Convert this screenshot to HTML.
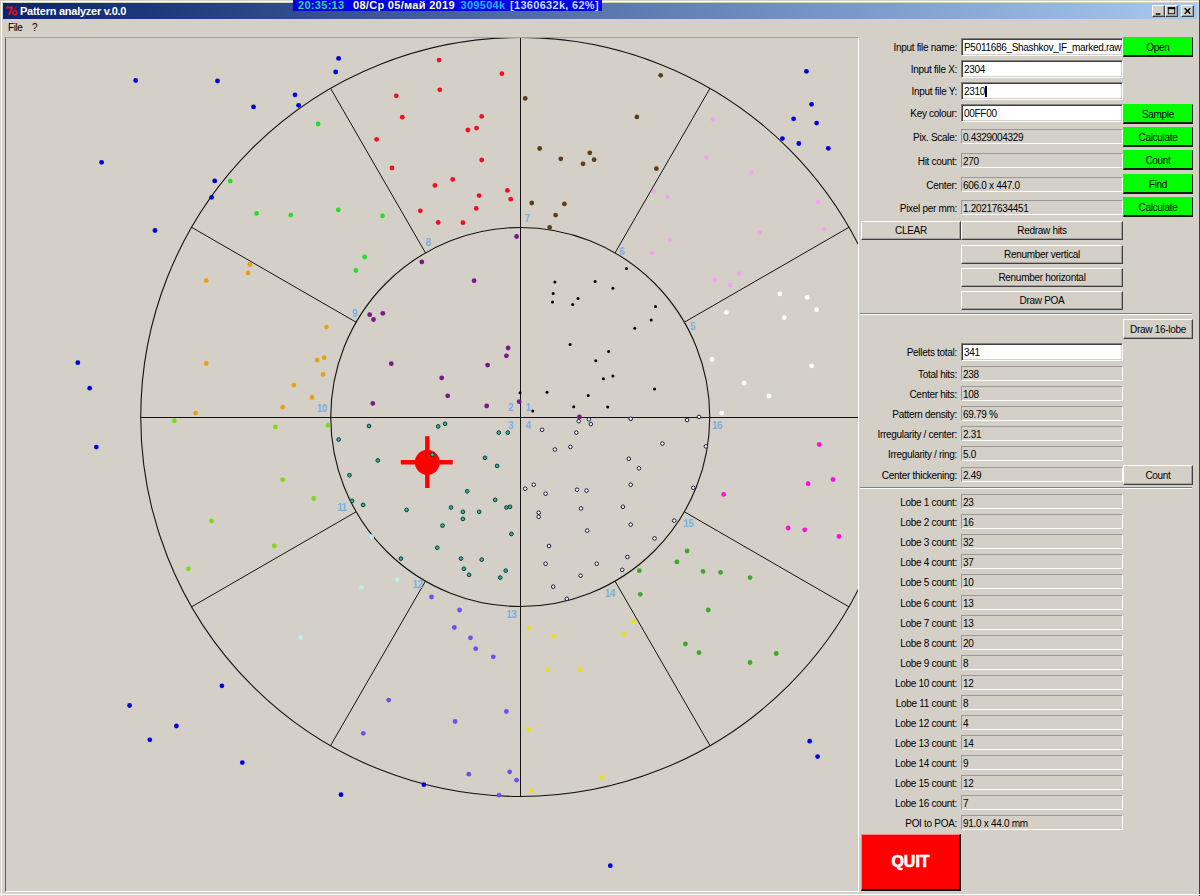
<!DOCTYPE html><html><head><meta charset="utf-8"><style>
*{margin:0;padding:0;box-sizing:border-box}
html,body{width:1200px;height:896px;overflow:hidden;background:#d4d0c8;font-family:"Liberation Sans",sans-serif;font-size:10px;color:#000;position:relative}
.a{position:absolute}
.lbl{position:absolute;right:243px;text-align:right;white-space:nowrap;letter-spacing:-0.3px}
.fld{position:absolute;left:961px;width:162px;border-top:1px solid #989898;border-left:1px solid #989898;border-bottom:1px solid #fff;border-right:1px solid #fff;background:#d4d0c8;padding-left:1px;white-space:nowrap;overflow:hidden;letter-spacing:-0.3px}
.wf{position:absolute;left:961px;width:162px;border-top:1px solid #808080;border-left:1px solid #808080;border-bottom:1px solid #fff;border-right:1px solid #fff;box-shadow:inset 1px 1px 0 #404040,inset -1px -1px 0 #d4d0c8;background:#fff;padding-left:2px;white-space:nowrap;overflow:hidden;letter-spacing:-0.3px}
.caret{display:inline-block;width:2px;height:11px;background:#000;vertical-align:middle;margin-top:-1px}
.btn{position:absolute;border-top:1px solid #fff;border-left:1px solid #fff;border-right:1px solid #404040;border-bottom:1px solid #404040;box-shadow:inset -1px -1px 0 #a0a0a0;background:#d4d0c8;text-align:center;white-space:nowrap;letter-spacing:-0.3px}
.g{background:#00ff00;border-top-color:#00ff00;border-left-color:#00ff00;border-right:1px solid #102010;border-bottom:2px solid #102010;box-shadow:none}
.sep{position:absolute;left:860px;width:332px;height:2px;border-top:1px solid #808080;border-bottom:1px solid #fff}
.clk{font-weight:bold;font-size:11px;line-height:12px;white-space:nowrap;letter-spacing:0.3px}
svg text.ln{font-family:"Liberation Sans",sans-serif;font-size:10px;font-weight:bold;fill:#78b0e0;letter-spacing:-0.6px}
</style></head><body>
<div class="a" style="left:0;top:0;width:1200px;height:896px;border-left:1px solid #d4d0c8;border-top:1px solid #d4d0c8;box-shadow:inset 1px 1px 0 #fff"></div>
<div class="a" style="left:1199px;top:0;width:1px;height:896px;background:#404040"></div>
<div class="a" style="left:0;top:894px;width:1200px;height:1px;background:#fff"></div>
<div class="a" style="left:3px;top:3px;width:1194px;height:16px;background:linear-gradient(to right,#0a246a,#a6caf0)"></div>
<svg class="a" style="left:0;top:0" width="22" height="20" viewBox="0 0 22 20"><path d="M6 7.5 L12 7.5 L9 15" fill="none" stroke="#d01830" stroke-width="2"/><path d="M16.5 6.5 Q13.5 9 13.2 12.5" fill="none" stroke="#a01040" stroke-width="1.3"/><circle cx="14.8" cy="12.8" r="2" fill="none" stroke="#e0102a" stroke-width="1.6"/></svg>
<div class="a" style="left:20px;top:3px;font-size:11px;font-weight:bold;color:#fff;line-height:16px;letter-spacing:-0.25px">Pattern analyzer v.0.0</div>
<div class="a" style="left:293px;top:0;width:309px;height:11px;background:#0000e8"></div>
<div class="a clk" style="left:298px;top:-1px;color:#30d890">20:35:13</div>
<div class="a clk" style="left:353px;top:-1px;color:#ffffa8">08/Ср 05/май 2019</div>
<div class="a clk" style="left:460.5px;top:-1px;color:#20b8ff">309504k</div>
<div class="a clk" style="left:510px;top:-1px;color:#c8dcff">[1360632k, 62%]</div>
<div class="btn" style="left:1152px;top:5px;width:13px;height:12px"><svg width="11" height="10" viewBox="0 0 12 10" style="position:absolute;left:0;top:0"><rect x="3" y="7.5" width="5" height="1.6" fill="#000"/></svg></div>
<div class="btn" style="left:1165px;top:5px;width:13px;height:12px"><svg width="11" height="10" viewBox="0 0 12 10" style="position:absolute;left:0;top:0"><rect x="2.5" y="1.5" width="7" height="6.5" fill="none" stroke="#000" stroke-width="1"/><rect x="2" y="1" width="8" height="2" fill="#000"/></svg></div>
<div class="btn" style="left:1181px;top:5px;width:13px;height:12px"><svg width="11" height="10" viewBox="0 0 12 10" style="position:absolute;left:0;top:0"><path d="M3 2 L9 8 M9 2 L3 8" stroke="#000" stroke-width="1.6"/></svg></div>
<div class="a" style="left:8px;top:22px;line-height:12px;letter-spacing:-0.4px">File</div>
<div class="a" style="left:32px;top:22px;line-height:12px">?</div>
<div class="a" style="left:5px;top:37px;width:854px;height:855px;border-top:1px solid #a0a0a0;border-left:1px solid #606060;border-right:1px solid #fff;border-bottom:1px solid #fff;overflow:hidden">
<svg width="852" height="853" viewBox="6 38 852 853" style="position:absolute;left:0;top:0">
<circle cx="520.25" cy="417.0" r="379.5" fill="none" stroke="#141414" stroke-width="1.1"/>
<circle cx="520.25" cy="417.0" r="189.5" fill="none" stroke="#141414" stroke-width="1.1"/>
<line x1="140.75" y1="417.5" x2="860" y2="417.5" stroke="#141414" stroke-width="1"/>
<line x1="520.5" y1="37.5" x2="520.5" y2="796.5" stroke="#141414" stroke-width="1"/>
<line x1="684.4" y1="322.2" x2="848.9" y2="227.3" stroke="#141414" stroke-width="1"/>
<line x1="615.0" y1="252.9" x2="710.0" y2="88.3" stroke="#141414" stroke-width="1"/>
<line x1="425.5" y1="252.9" x2="330.5" y2="88.3" stroke="#141414" stroke-width="1"/>
<line x1="356.1" y1="322.2" x2="191.6" y2="227.3" stroke="#141414" stroke-width="1"/>
<line x1="356.1" y1="511.8" x2="191.6" y2="606.8" stroke="#141414" stroke-width="1"/>
<line x1="425.5" y1="581.1" x2="330.5" y2="745.7" stroke="#141414" stroke-width="1"/>
<line x1="615.0" y1="581.1" x2="710.0" y2="745.7" stroke="#141414" stroke-width="1"/>
<line x1="684.4" y1="511.8" x2="848.9" y2="606.8" stroke="#141414" stroke-width="1"/>
<circle cx="135.7" cy="80.5" r="2.4" fill="#0000dd"/>
<circle cx="217.5" cy="81" r="2.4" fill="#0000dd"/>
<circle cx="101.6" cy="162.3" r="2.4" fill="#0000dd"/>
<circle cx="214.7" cy="180.9" r="2.4" fill="#0000dd"/>
<circle cx="211.6" cy="197.3" r="2.4" fill="#0000dd"/>
<circle cx="155" cy="230.5" r="2.4" fill="#0000dd"/>
<circle cx="338.6" cy="58.4" r="2.4" fill="#0000dd"/>
<circle cx="335.7" cy="72" r="2.4" fill="#0000dd"/>
<circle cx="295" cy="94.8" r="2.4" fill="#0000dd"/>
<circle cx="298.6" cy="105.3" r="2.4" fill="#0000dd"/>
<circle cx="253.5" cy="106.9" r="2.4" fill="#0000dd"/>
<circle cx="806.4" cy="71.3" r="2.4" fill="#0000dd"/>
<circle cx="811.6" cy="104.3" r="2.4" fill="#0000dd"/>
<circle cx="793.6" cy="118.8" r="2.4" fill="#0000dd"/>
<circle cx="816.6" cy="123.1" r="2.4" fill="#0000dd"/>
<circle cx="782.4" cy="138.6" r="2.4" fill="#0000dd"/>
<circle cx="798.8" cy="143.5" r="2.4" fill="#0000dd"/>
<circle cx="828.3" cy="148.3" r="2.4" fill="#0000dd"/>
<circle cx="77.8" cy="362.7" r="2.4" fill="#0000dd"/>
<circle cx="89.7" cy="388.2" r="2.4" fill="#0000dd"/>
<circle cx="96.3" cy="447.1" r="2.4" fill="#0000dd"/>
<circle cx="129.6" cy="705.5" r="2.4" fill="#0000dd"/>
<circle cx="176.4" cy="726" r="2.4" fill="#0000dd"/>
<circle cx="149.8" cy="739.8" r="2.4" fill="#0000dd"/>
<circle cx="221.9" cy="685.8" r="2.4" fill="#0000dd"/>
<circle cx="242.3" cy="762.6" r="2.4" fill="#0000dd"/>
<circle cx="341" cy="794.7" r="2.4" fill="#0000dd"/>
<circle cx="423.9" cy="784.7" r="2.4" fill="#0000dd"/>
<circle cx="610.3" cy="865.7" r="2.4" fill="#0000dd"/>
<circle cx="809.7" cy="741.2" r="2.4" fill="#0000dd"/>
<circle cx="817.6" cy="756.6" r="2.4" fill="#0000dd"/>
<circle cx="318.1" cy="124" r="2.4" fill="#20e020"/>
<circle cx="230.2" cy="181.1" r="2.4" fill="#20e020"/>
<circle cx="256.6" cy="213.4" r="2.4" fill="#20e020"/>
<circle cx="290.8" cy="215.1" r="2.4" fill="#20e020"/>
<circle cx="338.3" cy="209.9" r="2.4" fill="#20e020"/>
<circle cx="382.5" cy="215.8" r="2.4" fill="#20e020"/>
<circle cx="364.7" cy="256.9" r="2.4" fill="#20e020"/>
<circle cx="355.9" cy="270.5" r="2.4" fill="#20e020"/>
<circle cx="396.3" cy="95.8" r="2.4" fill="#f01020"/>
<circle cx="402.3" cy="117.2" r="2.4" fill="#f01020"/>
<circle cx="376.6" cy="139.3" r="2.4" fill="#f01020"/>
<circle cx="392" cy="168" r="2.4" fill="#f01020"/>
<circle cx="420.3" cy="210.8" r="2.4" fill="#f01020"/>
<circle cx="439.1" cy="60.1" r="2.4" fill="#f01020"/>
<circle cx="501.9" cy="73.7" r="2.4" fill="#f01020"/>
<circle cx="439.8" cy="89.8" r="2.4" fill="#f01020"/>
<circle cx="481.7" cy="116.4" r="2.4" fill="#f01020"/>
<circle cx="467.9" cy="130" r="2.4" fill="#f01020"/>
<circle cx="476.5" cy="128.1" r="2.4" fill="#f01020"/>
<circle cx="481.7" cy="160" r="2.4" fill="#f01020"/>
<circle cx="452.7" cy="179.4" r="2.4" fill="#f01020"/>
<circle cx="434.9" cy="185.4" r="2.4" fill="#f01020"/>
<circle cx="479.1" cy="195.6" r="2.4" fill="#f01020"/>
<circle cx="507.4" cy="190.4" r="2.4" fill="#f01020"/>
<circle cx="510.7" cy="199.2" r="2.4" fill="#f01020"/>
<circle cx="476.2" cy="208.4" r="2.4" fill="#f01020"/>
<circle cx="438.2" cy="222.5" r="2.4" fill="#f01020"/>
<circle cx="462.9" cy="222.7" r="2.4" fill="#f01020"/>
<circle cx="525.2" cy="98.4" r="2.4" fill="#5a3f18"/>
<circle cx="636.9" cy="116.9" r="2.4" fill="#5a3f18"/>
<circle cx="539.7" cy="148.5" r="2.4" fill="#5a3f18"/>
<circle cx="560.8" cy="158.8" r="2.4" fill="#5a3f18"/>
<circle cx="589.8" cy="152.8" r="2.4" fill="#5a3f18"/>
<circle cx="594.1" cy="159.7" r="2.4" fill="#5a3f18"/>
<circle cx="583" cy="163.8" r="2.4" fill="#5a3f18"/>
<circle cx="531.8" cy="203" r="2.4" fill="#5a3f18"/>
<circle cx="564.4" cy="203.9" r="2.4" fill="#5a3f18"/>
<circle cx="555.6" cy="215.1" r="2.4" fill="#5a3f18"/>
<circle cx="549.7" cy="227.5" r="2.4" fill="#5a3f18"/>
<circle cx="660.7" cy="75.3" r="2.4" fill="#5a3f18"/>
<circle cx="656.4" cy="168.7" r="2.4" fill="#5a3f18"/>
<circle cx="713.2" cy="119.3" r="2.4" fill="#eea6ee"/>
<circle cx="706.3" cy="157.6" r="2.4" fill="#eea6ee"/>
<circle cx="751.3" cy="172.5" r="2.4" fill="#eea6ee"/>
<circle cx="654" cy="191.3" r="2.4" fill="#eea6ee"/>
<circle cx="667.6" cy="196.8" r="2.4" fill="#eea6ee"/>
<circle cx="818" cy="202" r="2.4" fill="#eea6ee"/>
<circle cx="759.8" cy="232.9" r="2.4" fill="#eea6ee"/>
<circle cx="824" cy="229.4" r="2.4" fill="#eea6ee"/>
<circle cx="670" cy="240" r="2.4" fill="#eea6ee"/>
<circle cx="652.1" cy="253.4" r="2.4" fill="#eea6ee"/>
<circle cx="714.7" cy="280" r="2.4" fill="#eea6ee"/>
<circle cx="730.1" cy="285" r="2.4" fill="#eea6ee"/>
<circle cx="739.1" cy="273.6" r="2.4" fill="#eea6ee"/>
<circle cx="206.2" cy="280.7" r="2.4" fill="#e8a018"/>
<circle cx="206.2" cy="363.4" r="2.4" fill="#e8a018"/>
<circle cx="195.7" cy="413.1" r="2.4" fill="#e8a018"/>
<circle cx="249.9" cy="264.5" r="2.4" fill="#e8a018"/>
<circle cx="248" cy="272.9" r="2.4" fill="#e8a018"/>
<circle cx="326.4" cy="327.1" r="2.4" fill="#e8a018"/>
<circle cx="317.2" cy="360.1" r="2.4" fill="#e8a018"/>
<circle cx="324.1" cy="357.7" r="2.4" fill="#e8a018"/>
<circle cx="323.1" cy="374.4" r="2.4" fill="#e8a018"/>
<circle cx="293.9" cy="385.1" r="2.4" fill="#e8a018"/>
<circle cx="312" cy="397.4" r="2.4" fill="#e8a018"/>
<circle cx="282.7" cy="407.2" r="2.4" fill="#e8a018"/>
<circle cx="174.3" cy="420.7" r="2.4" fill="#80d818"/>
<circle cx="275.3" cy="426.9" r="2.4" fill="#80d818"/>
<circle cx="327.9" cy="425.2" r="2.4" fill="#80d818"/>
<circle cx="211.6" cy="521" r="2.4" fill="#80d818"/>
<circle cx="188.3" cy="568.8" r="2.4" fill="#80d818"/>
<circle cx="282.7" cy="479.7" r="2.4" fill="#80d818"/>
<circle cx="313.8" cy="498.5" r="2.4" fill="#80d818"/>
<circle cx="274.4" cy="546" r="2.4" fill="#80d818"/>
<circle cx="421.8" cy="261.9" r="2.4" fill="#7a1888"/>
<circle cx="369.7" cy="314.7" r="2.4" fill="#7a1888"/>
<circle cx="373.5" cy="319.5" r="2.4" fill="#7a1888"/>
<circle cx="382.8" cy="313.3" r="2.4" fill="#7a1888"/>
<circle cx="391.3" cy="363.7" r="2.4" fill="#7a1888"/>
<circle cx="372.8" cy="403.4" r="2.4" fill="#7a1888"/>
<circle cx="474.1" cy="280.7" r="2.4" fill="#7a1888"/>
<circle cx="508.1" cy="348" r="2.4" fill="#7a1888"/>
<circle cx="506.4" cy="355.8" r="2.4" fill="#7a1888"/>
<circle cx="487.6" cy="365.1" r="2.4" fill="#7a1888"/>
<circle cx="441.7" cy="377.9" r="2.4" fill="#7a1888"/>
<circle cx="447.7" cy="395.8" r="2.4" fill="#7a1888"/>
<circle cx="486.7" cy="406" r="2.4" fill="#7a1888"/>
<circle cx="519.2" cy="401.7" r="2.4" fill="#7a1888"/>
<circle cx="579.4" cy="416.9" r="2.4" fill="#7a1888"/>
<circle cx="516.6" cy="236.5" r="2.4" fill="#7a1888"/>
<circle cx="369" cy="426" r="1.85" fill="#30b8a0" stroke="#083838" stroke-width="1"/>
<circle cx="338.6" cy="439.5" r="1.85" fill="#30b8a0" stroke="#083838" stroke-width="1"/>
<circle cx="377.8" cy="460.4" r="1.85" fill="#30b8a0" stroke="#083838" stroke-width="1"/>
<circle cx="438.2" cy="426.4" r="1.85" fill="#30b8a0" stroke="#083838" stroke-width="1"/>
<circle cx="445.1" cy="423.8" r="1.85" fill="#30b8a0" stroke="#083838" stroke-width="1"/>
<circle cx="498.8" cy="432.6" r="1.85" fill="#30b8a0" stroke="#083838" stroke-width="1"/>
<circle cx="507.8" cy="432.6" r="1.85" fill="#30b8a0" stroke="#083838" stroke-width="1"/>
<circle cx="485" cy="457.8" r="1.85" fill="#30b8a0" stroke="#083838" stroke-width="1"/>
<circle cx="349.5" cy="475.2" r="1.85" fill="#30b8a0" stroke="#083838" stroke-width="1"/>
<circle cx="352.1" cy="500.8" r="1.85" fill="#30b8a0" stroke="#083838" stroke-width="1"/>
<circle cx="363.1" cy="504.9" r="1.85" fill="#30b8a0" stroke="#083838" stroke-width="1"/>
<circle cx="406.6" cy="509.9" r="1.85" fill="#30b8a0" stroke="#083838" stroke-width="1"/>
<circle cx="400.9" cy="558.6" r="1.85" fill="#30b8a0" stroke="#083838" stroke-width="1"/>
<circle cx="497.1" cy="465.9" r="1.85" fill="#30b8a0" stroke="#083838" stroke-width="1"/>
<circle cx="467.2" cy="491.3" r="1.85" fill="#30b8a0" stroke="#083838" stroke-width="1"/>
<circle cx="495.2" cy="499.9" r="1.85" fill="#30b8a0" stroke="#083838" stroke-width="1"/>
<circle cx="451" cy="507.5" r="1.85" fill="#30b8a0" stroke="#083838" stroke-width="1"/>
<circle cx="462.9" cy="511.8" r="1.85" fill="#30b8a0" stroke="#083838" stroke-width="1"/>
<circle cx="479.1" cy="511.8" r="1.85" fill="#30b8a0" stroke="#083838" stroke-width="1"/>
<circle cx="506.4" cy="507.5" r="1.85" fill="#30b8a0" stroke="#083838" stroke-width="1"/>
<circle cx="510" cy="506.8" r="1.85" fill="#30b8a0" stroke="#083838" stroke-width="1"/>
<circle cx="462.9" cy="518.9" r="1.85" fill="#30b8a0" stroke="#083838" stroke-width="1"/>
<circle cx="442.5" cy="525.6" r="1.85" fill="#30b8a0" stroke="#083838" stroke-width="1"/>
<circle cx="511.4" cy="533.9" r="1.85" fill="#30b8a0" stroke="#083838" stroke-width="1"/>
<circle cx="437.2" cy="547.7" r="1.85" fill="#30b8a0" stroke="#083838" stroke-width="1"/>
<circle cx="461" cy="558.6" r="1.85" fill="#30b8a0" stroke="#083838" stroke-width="1"/>
<circle cx="481.7" cy="559.6" r="1.85" fill="#30b8a0" stroke="#083838" stroke-width="1"/>
<circle cx="463.9" cy="568.8" r="1.85" fill="#30b8a0" stroke="#083838" stroke-width="1"/>
<circle cx="469.1" cy="574.8" r="1.85" fill="#30b8a0" stroke="#083838" stroke-width="1"/>
<circle cx="505.7" cy="570.7" r="1.85" fill="#30b8a0" stroke="#083838" stroke-width="1"/>
<circle cx="500.2" cy="577.6" r="1.85" fill="#30b8a0" stroke="#083838" stroke-width="1"/>
<circle cx="626.5" cy="268.6" r="1.5" fill="#000000"/>
<circle cx="554.9" cy="282.1" r="1.5" fill="#000000"/>
<circle cx="595.1" cy="281.4" r="1.5" fill="#000000"/>
<circle cx="612.9" cy="288.3" r="1.5" fill="#000000"/>
<circle cx="553.2" cy="293.6" r="1.5" fill="#000000"/>
<circle cx="552.5" cy="301.9" r="1.5" fill="#000000"/>
<circle cx="578" cy="298.5" r="1.5" fill="#000000"/>
<circle cx="572.7" cy="304.5" r="1.5" fill="#000000"/>
<circle cx="634.8" cy="328.3" r="1.5" fill="#000000"/>
<circle cx="570.1" cy="344.4" r="1.5" fill="#000000"/>
<circle cx="608.6" cy="351.6" r="1.5" fill="#000000"/>
<circle cx="595.8" cy="360.8" r="1.5" fill="#000000"/>
<circle cx="603.4" cy="378.7" r="1.5" fill="#000000"/>
<circle cx="612.9" cy="376" r="1.5" fill="#000000"/>
<circle cx="547" cy="392.2" r="1.5" fill="#000000"/>
<circle cx="588.2" cy="395.5" r="1.5" fill="#000000"/>
<circle cx="520" cy="392.7" r="1.5" fill="#000000"/>
<circle cx="573.7" cy="406.7" r="1.5" fill="#000000"/>
<circle cx="607.7" cy="407" r="1.5" fill="#000000"/>
<circle cx="532.8" cy="411" r="1.5" fill="#000000"/>
<circle cx="655.5" cy="306.4" r="1.5" fill="#000000"/>
<circle cx="651.2" cy="319.9" r="1.5" fill="#000000"/>
<circle cx="654.5" cy="388.9" r="1.5" fill="#000000"/>
<circle cx="578.7" cy="421.2" r="1.8" fill="#ffffd8" stroke="#141450" stroke-width="1"/>
<circle cx="588.9" cy="419.3" r="1.8" fill="#ffffd8" stroke="#141450" stroke-width="1"/>
<circle cx="590.8" cy="424.1" r="1.8" fill="#ffffd8" stroke="#141450" stroke-width="1"/>
<circle cx="630.7" cy="418.8" r="1.8" fill="#ffffd8" stroke="#141450" stroke-width="1"/>
<circle cx="542.1" cy="429.8" r="1.8" fill="#ffffd8" stroke="#141450" stroke-width="1"/>
<circle cx="576.3" cy="432.6" r="1.8" fill="#ffffd8" stroke="#141450" stroke-width="1"/>
<circle cx="570.4" cy="446.9" r="1.8" fill="#ffffd8" stroke="#141450" stroke-width="1"/>
<circle cx="554.9" cy="449.5" r="1.8" fill="#ffffd8" stroke="#141450" stroke-width="1"/>
<circle cx="628.8" cy="458.8" r="1.8" fill="#ffffd8" stroke="#141450" stroke-width="1"/>
<circle cx="687.1" cy="420" r="1.8" fill="#ffffd8" stroke="#141450" stroke-width="1"/>
<circle cx="699" cy="416.9" r="1.8" fill="#ffffd8" stroke="#141450" stroke-width="1"/>
<circle cx="662.4" cy="443.6" r="1.8" fill="#ffffd8" stroke="#141450" stroke-width="1"/>
<circle cx="705.9" cy="446.4" r="1.8" fill="#ffffd8" stroke="#141450" stroke-width="1"/>
<circle cx="639" cy="468.3" r="1.8" fill="#ffffd8" stroke="#141450" stroke-width="1"/>
<circle cx="525.2" cy="488.7" r="1.8" fill="#ffffd8" stroke="#141450" stroke-width="1"/>
<circle cx="533.7" cy="484.7" r="1.8" fill="#ffffd8" stroke="#141450" stroke-width="1"/>
<circle cx="545.6" cy="493.7" r="1.8" fill="#ffffd8" stroke="#141450" stroke-width="1"/>
<circle cx="577" cy="489.7" r="1.8" fill="#ffffd8" stroke="#141450" stroke-width="1"/>
<circle cx="586.5" cy="490.6" r="1.8" fill="#ffffd8" stroke="#141450" stroke-width="1"/>
<circle cx="630.7" cy="484.7" r="1.8" fill="#ffffd8" stroke="#141450" stroke-width="1"/>
<circle cx="581" cy="508.5" r="1.8" fill="#ffffd8" stroke="#141450" stroke-width="1"/>
<circle cx="622.9" cy="506.8" r="1.8" fill="#ffffd8" stroke="#141450" stroke-width="1"/>
<circle cx="538.7" cy="512.7" r="1.8" fill="#ffffd8" stroke="#141450" stroke-width="1"/>
<circle cx="538.7" cy="516.8" r="1.8" fill="#ffffd8" stroke="#141450" stroke-width="1"/>
<circle cx="630.7" cy="524.6" r="1.8" fill="#ffffd8" stroke="#141450" stroke-width="1"/>
<circle cx="587.2" cy="530.6" r="1.8" fill="#ffffd8" stroke="#141450" stroke-width="1"/>
<circle cx="549" cy="546" r="1.8" fill="#ffffd8" stroke="#141450" stroke-width="1"/>
<circle cx="627.4" cy="557" r="1.8" fill="#ffffd8" stroke="#141450" stroke-width="1"/>
<circle cx="545.6" cy="563.8" r="1.8" fill="#ffffd8" stroke="#141450" stroke-width="1"/>
<circle cx="596.7" cy="563.8" r="1.8" fill="#ffffd8" stroke="#141450" stroke-width="1"/>
<circle cx="622.2" cy="569.8" r="1.8" fill="#ffffd8" stroke="#141450" stroke-width="1"/>
<circle cx="580.6" cy="575.7" r="1.8" fill="#ffffd8" stroke="#141450" stroke-width="1"/>
<circle cx="553.2" cy="586.7" r="1.8" fill="#ffffd8" stroke="#141450" stroke-width="1"/>
<circle cx="566.8" cy="598.8" r="1.8" fill="#ffffd8" stroke="#141450" stroke-width="1"/>
<circle cx="693.3" cy="487.8" r="1.8" fill="#ffffd8" stroke="#141450" stroke-width="1"/>
<circle cx="674.2" cy="520.6" r="1.8" fill="#ffffd8" stroke="#141450" stroke-width="1"/>
<circle cx="654.5" cy="538.4" r="1.8" fill="#ffffd8" stroke="#141450" stroke-width="1"/>
<circle cx="779.8" cy="293.8" r="2.4" fill="#ffffff"/>
<circle cx="807.1" cy="297.4" r="2.4" fill="#ffffff"/>
<circle cx="816.6" cy="309.7" r="2.4" fill="#ffffff"/>
<circle cx="784.3" cy="317.6" r="2.4" fill="#ffffff"/>
<circle cx="726.3" cy="312.3" r="2.4" fill="#ffffff"/>
<circle cx="712" cy="359.4" r="2.4" fill="#ffffff"/>
<circle cx="811.6" cy="365.8" r="2.4" fill="#ffffff"/>
<circle cx="744.1" cy="383.2" r="2.4" fill="#ffffff"/>
<circle cx="768.9" cy="396" r="2.4" fill="#ffffff"/>
<circle cx="721.8" cy="413.1" r="2.4" fill="#ffffff"/>
<circle cx="819.2" cy="444.5" r="2.4" fill="#ff10d8"/>
<circle cx="723.7" cy="494.4" r="2.4" fill="#ff10d8"/>
<circle cx="808.1" cy="483.7" r="2.4" fill="#ff10d8"/>
<circle cx="833" cy="479.5" r="2.4" fill="#ff10d8"/>
<circle cx="788.1" cy="528" r="2.4" fill="#ff10d8"/>
<circle cx="804.7" cy="529.8" r="2.4" fill="#ff10d8"/>
<circle cx="839" cy="536.5" r="2.4" fill="#ff10d8"/>
<circle cx="371.6" cy="536.7" r="2.4" fill="#b8f0f0"/>
<circle cx="361.6" cy="587.6" r="2.4" fill="#b8f0f0"/>
<circle cx="397.3" cy="579.8" r="2.4" fill="#b8f0f0"/>
<circle cx="300.5" cy="637.5" r="2.4" fill="#b8f0f0"/>
<circle cx="431.5" cy="597" r="2.4" fill="#7050e8"/>
<circle cx="459.6" cy="610" r="2.4" fill="#7050e8"/>
<circle cx="454.3" cy="627.5" r="2.4" fill="#7050e8"/>
<circle cx="470.5" cy="637.8" r="2.4" fill="#7050e8"/>
<circle cx="475.7" cy="648.7" r="2.4" fill="#7050e8"/>
<circle cx="493.3" cy="656.8" r="2.4" fill="#7050e8"/>
<circle cx="388.7" cy="700.1" r="2.4" fill="#7050e8"/>
<circle cx="363.3" cy="733.3" r="2.4" fill="#7050e8"/>
<circle cx="506.4" cy="711.5" r="2.4" fill="#7050e8"/>
<circle cx="455.1" cy="721.5" r="2.4" fill="#7050e8"/>
<circle cx="468.8" cy="774.2" r="2.4" fill="#7050e8"/>
<circle cx="509.7" cy="771.8" r="2.4" fill="#7050e8"/>
<circle cx="516.6" cy="780.2" r="2.4" fill="#7050e8"/>
<circle cx="499" cy="795.1" r="2.4" fill="#7050e8"/>
<circle cx="528.8" cy="627.8" r="2.4" fill="#e8e020"/>
<circle cx="553.7" cy="636.3" r="2.4" fill="#e8e020"/>
<circle cx="547.5" cy="669.6" r="2.4" fill="#e8e020"/>
<circle cx="580.3" cy="669.4" r="2.4" fill="#e8e020"/>
<circle cx="633.6" cy="621.1" r="2.4" fill="#e8e020"/>
<circle cx="624.1" cy="634.4" r="2.4" fill="#e8e020"/>
<circle cx="528.8" cy="729.5" r="2.4" fill="#e8e020"/>
<circle cx="602.2" cy="777.8" r="2.4" fill="#e8e020"/>
<circle cx="531.1" cy="790.6" r="2.4" fill="#e8e020"/>
<circle cx="639.3" cy="570.7" r="2.4" fill="#40a828"/>
<circle cx="640.2" cy="594.3" r="2.4" fill="#40a828"/>
<circle cx="687.1" cy="551" r="2.4" fill="#40a828"/>
<circle cx="676.9" cy="561.9" r="2.4" fill="#40a828"/>
<circle cx="703" cy="571.4" r="2.4" fill="#40a828"/>
<circle cx="720.6" cy="572.4" r="2.4" fill="#40a828"/>
<circle cx="750.1" cy="577.6" r="2.4" fill="#40a828"/>
<circle cx="708.2" cy="610" r="2.4" fill="#40a828"/>
<circle cx="685.4" cy="644" r="2.4" fill="#40a828"/>
<circle cx="699" cy="652.7" r="2.4" fill="#40a828"/>
<circle cx="776.2" cy="653.5" r="2.4" fill="#40a828"/>
<circle cx="750.1" cy="662.5" r="2.4" fill="#40a828"/>
<text x="428" y="245.9" text-anchor="middle" class="ln">8</text>
<text x="527.1" y="221.7" text-anchor="middle" class="ln">7</text>
<text x="621.8" y="255.0" text-anchor="middle" class="ln">6</text>
<text x="354.5" y="317.0" text-anchor="middle" class="ln">9</text>
<text x="321.7" y="411.9" text-anchor="middle" class="ln">10</text>
<text x="510.4" y="411.4" text-anchor="middle" class="ln">2</text>
<text x="528" y="411.4" text-anchor="middle" class="ln">1</text>
<text x="510.4" y="428.7" text-anchor="middle" class="ln">3</text>
<text x="528" y="428.7" text-anchor="middle" class="ln">4</text>
<text x="692.5" y="330.1" text-anchor="middle" class="ln">5</text>
<text x="717" y="429.2" text-anchor="middle" class="ln">16</text>
<text x="341.9" y="511.0" text-anchor="middle" class="ln">11</text>
<text x="417.5" y="587.5" text-anchor="middle" class="ln">12</text>
<text x="511.2" y="618.0" text-anchor="middle" class="ln">13</text>
<text x="609.8" y="597.1" text-anchor="middle" class="ln">14</text>
<text x="688.3" y="527.4" text-anchor="middle" class="ln">15</text>
<g><line x1="400.8" y1="462.3" x2="452.7" y2="462.3" stroke="#ff0000" stroke-width="4.4"/><line x1="427.3" y1="436.2" x2="427.3" y2="488" stroke="#ff0000" stroke-width="4.4"/><circle cx="427.3" cy="462.3" r="12.5" fill="#ff0000"/><circle cx="432.4" cy="454.7" r="2" fill="#30c090" stroke="#083838" stroke-width="1"/></g>
</svg></div>
<div class="lbl" style="top:39px;height:18px;line-height:18px">Input file name:</div>
<div class="wf" style="top:38px;height:18px;line-height:17px">P5011686_Shashkov_IF_marked.raw</div>
<div class="lbl" style="top:61px;height:18px;line-height:18px">Input file X:</div>
<div class="wf" style="top:60px;height:18px;line-height:17px">2304</div>
<div class="lbl" style="top:83px;height:18px;line-height:18px">Input file Y:</div>
<div class="wf" style="top:82px;height:18px;line-height:17px">2310<span class="caret"></span></div>
<div class="lbl" style="top:105px;height:18px;line-height:18px">Key colour:</div>
<div class="wf" style="top:104px;height:18px;line-height:17px">00FF00</div>
<div class="btn g" style="left:1123px;top:37px;width:70px;height:20px;line-height:19px">Open</div>
<div class="btn g" style="left:1123px;top:104px;width:70px;height:20px;line-height:19px">Sample</div>
<div class="lbl" style="top:130px;height:15px;line-height:15px">Pix. Scale:</div>
<div class="fld" style="top:129px;height:15px;line-height:16px">0.4329004329</div>
<div class="btn g" style="left:1123px;top:127px;width:70px;height:20px;line-height:19px">Calculate</div>
<div class="lbl" style="top:154px;height:15px;line-height:15px">Hit count:</div>
<div class="fld" style="top:153px;height:15px;line-height:16px">270</div>
<div class="btn g" style="left:1123px;top:150px;width:70px;height:20px;line-height:19px">Count</div>
<div class="lbl" style="top:178px;height:15px;line-height:15px">Center:</div>
<div class="fld" style="top:177px;height:15px;line-height:16px">606.0 x 447.0</div>
<div class="btn g" style="left:1123px;top:174px;width:70px;height:20px;line-height:19px">Find</div>
<div class="lbl" style="top:201px;height:15px;line-height:15px">Pixel per mm:</div>
<div class="fld" style="top:200px;height:15px;line-height:16px">1.20217634451</div>
<div class="btn g" style="left:1123px;top:197px;width:70px;height:20px;line-height:19px">Calculate</div>
<div class="btn" style="left:861px;top:221px;width:100px;height:19px;line-height:18px">CLEAR</div>
<div class="btn" style="left:961px;top:221px;width:162px;height:19px;line-height:18px">Redraw hits</div>
<div class="btn" style="left:961px;top:245px;width:162px;height:19px;line-height:18px">Renumber vertical</div>
<div class="btn" style="left:961px;top:268px;width:162px;height:19px;line-height:18px">Renumber horizontal</div>
<div class="btn" style="left:961px;top:291px;width:162px;height:19px;line-height:18px">Draw POA</div>
<div class="sep" style="top:313px"></div>
<div class="btn" style="left:1123px;top:319px;width:70px;height:20px;line-height:19px">Draw 16-lobe</div>
<div class="lbl" style="top:344px;height:18px;line-height:18px">Pellets total:</div>
<div class="wf" style="top:343px;height:18px;line-height:17px">341</div>
<div class="lbl" style="top:367px;height:15px;line-height:15px">Total hits:</div>
<div class="fld" style="top:366px;height:15px;line-height:16px">238</div>
<div class="lbl" style="top:387px;height:15px;line-height:15px">Center hits:</div>
<div class="fld" style="top:386px;height:15px;line-height:16px">108</div>
<div class="lbl" style="top:407px;height:15px;line-height:15px">Pattern density:</div>
<div class="fld" style="top:406px;height:15px;line-height:16px">69.79 %</div>
<div class="lbl" style="top:427px;height:15px;line-height:15px">Irregularity / center:</div>
<div class="fld" style="top:426px;height:15px;line-height:16px">2.31</div>
<div class="lbl" style="top:447px;height:15px;line-height:15px">Irregularity / ring:</div>
<div class="fld" style="top:446px;height:15px;line-height:16px">5.0</div>
<div class="lbl" style="top:468px;height:15px;line-height:15px">Center thickening:</div>
<div class="fld" style="top:467px;height:15px;line-height:16px">2.49</div>
<div class="btn" style="left:1123px;top:465px;width:70px;height:20px;line-height:19px">Count</div>
<div class="sep" style="top:487px"></div>
<div class="lbl" style="top:495px;height:15px;line-height:15px">Lobe 1 count:</div>
<div class="fld" style="top:494px;height:15px;line-height:16px">23</div>
<div class="lbl" style="top:515px;height:15px;line-height:15px">Lobe 2 count:</div>
<div class="fld" style="top:514px;height:15px;line-height:16px">16</div>
<div class="lbl" style="top:535px;height:15px;line-height:15px">Lobe 3 count:</div>
<div class="fld" style="top:534px;height:15px;line-height:16px">32</div>
<div class="lbl" style="top:555px;height:15px;line-height:15px">Lobe 4 count:</div>
<div class="fld" style="top:554px;height:15px;line-height:16px">37</div>
<div class="lbl" style="top:575px;height:15px;line-height:15px">Lobe 5 count:</div>
<div class="fld" style="top:574px;height:15px;line-height:16px">10</div>
<div class="lbl" style="top:596px;height:15px;line-height:15px">Lobe 6 count:</div>
<div class="fld" style="top:595px;height:15px;line-height:16px">13</div>
<div class="lbl" style="top:616px;height:15px;line-height:15px">Lobe 7 count:</div>
<div class="fld" style="top:615px;height:15px;line-height:16px">13</div>
<div class="lbl" style="top:636px;height:15px;line-height:15px">Lobe 8 count:</div>
<div class="fld" style="top:635px;height:15px;line-height:16px">20</div>
<div class="lbl" style="top:656px;height:15px;line-height:15px">Lobe 9 count:</div>
<div class="fld" style="top:655px;height:15px;line-height:16px">8</div>
<div class="lbl" style="top:676px;height:15px;line-height:15px">Lobe 10 count:</div>
<div class="fld" style="top:675px;height:15px;line-height:16px">12</div>
<div class="lbl" style="top:696px;height:15px;line-height:15px">Lobe 11 count:</div>
<div class="fld" style="top:695px;height:15px;line-height:16px">8</div>
<div class="lbl" style="top:716px;height:15px;line-height:15px">Lobe 12 count:</div>
<div class="fld" style="top:715px;height:15px;line-height:16px">4</div>
<div class="lbl" style="top:736px;height:15px;line-height:15px">Lobe 13 count:</div>
<div class="fld" style="top:735px;height:15px;line-height:16px">14</div>
<div class="lbl" style="top:756px;height:15px;line-height:15px">Lobe 14 count:</div>
<div class="fld" style="top:755px;height:15px;line-height:16px">9</div>
<div class="lbl" style="top:776px;height:15px;line-height:15px">Lobe 15 count:</div>
<div class="fld" style="top:775px;height:15px;line-height:16px">12</div>
<div class="lbl" style="top:796px;height:15px;line-height:15px">Lobe 16 count:</div>
<div class="fld" style="top:795px;height:15px;line-height:16px">7</div>
<div class="lbl" style="top:816px;height:15px;line-height:15px">POI to POA:</div>
<div class="fld" style="top:815px;height:15px;line-height:16px">91.0 x 44.0 mm</div>
<div class="a" style="left:861px;top:834px;width:100px;height:57px;background:#ff0000;border-top:1px solid #ff8080;border-left:1px solid #ff8080;border-right:2px solid #000;border-bottom:2px solid #000;color:#fff;font-weight:bold;font-size:16px;-webkit-text-stroke:0.6px #fff;text-align:center;line-height:54px">QUIT</div>
</body></html>
